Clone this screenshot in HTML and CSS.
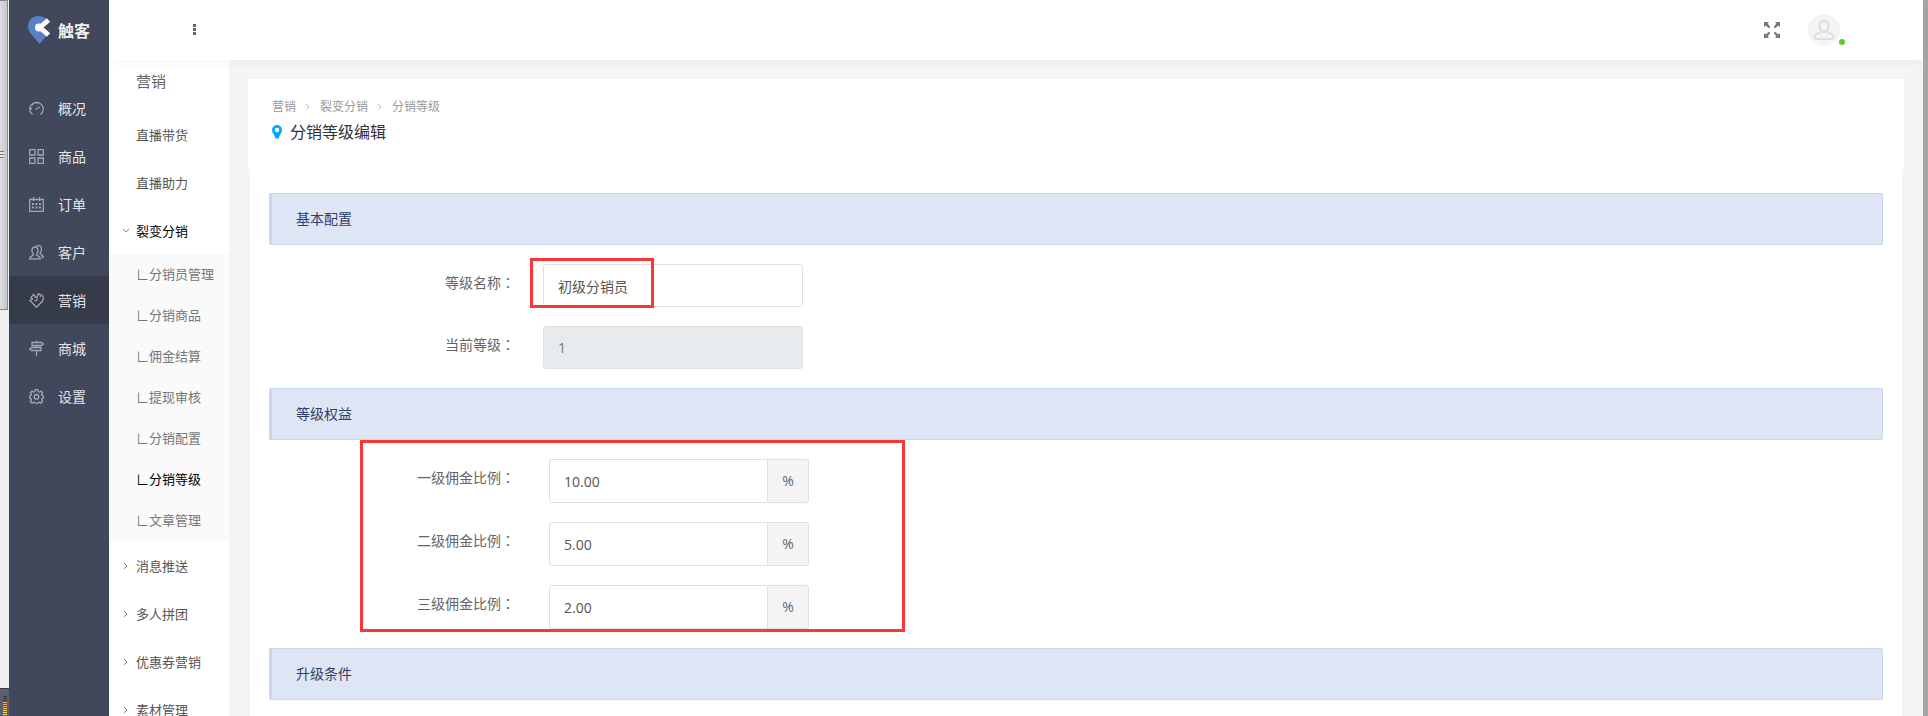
FILE: index.html
```
<!DOCTYPE html>
<html lang="zh-CN">
<head>
  <meta charset="UTF-8">
  <meta name="viewport" content="width=device-width, initial-scale=1.0">
  <title>分销等级编辑</title>
  <link rel="stylesheet" href="styles.css">
</head>
<body>
  <div class="edge">
    <div class="edge-thumb"><span class="edge-grip"></span></div>
    <div class="edge-meter"><span class="edge-bars"></span></div>
  </div>

  <nav class="sidebar">
    <a class="logo" href="#">
      <svg width="24" height="30" viewBox="0 0 24 30">
        <path d="M11.500 1C5.500 1 1 5.500 1 11.500c0 3 1.500 5.700 3.500 8L12.500 29l7.500-8.500L10 13l9-9.500C17 2 14.500 1 11.500 1z" fill="#5680c8"/>
        <path d="M21.500 5L13 12.500l8.500 7.500" fill="none" stroke="#fff" stroke-width="5"/>
        <circle cx="12" cy="12.500" r="4" fill="#fff"/>
      </svg>
      <span>触客</span>
    </a>
    <ul class="nav-list">
      <li><a href="#">
        <svg class="icon" viewBox="0 0 15 15"><path d="M3.500 13.500A6.700 6.700 0 1 1 11.500 13.500M6.500 8.500l4.500-2.500M7.500 1v2M1 7.500h2M3 3l1.200 1.200"/></svg>
        概况</a></li>
      <li><a href="#">
        <svg class="icon" viewBox="0 0 15 15"><path d="M.7.7h5.300v5.300H.7zM9 .7h5.300v5.300H9zM.7 9h5.300v5.300H.7zM9 9h5.300v5.300H9z"/></svg>
        商品</a></li>
      <li><a href="#">
        <svg class="icon" viewBox="0 0 15 15"><path d="M.7 2.500h13.600v11.800H.7zM4.500 0v4M10.500 0v4"/><path d="M3 7h2M6.500 7h2M10 7h2M3 10.500h2M6.500 10.500h2M10 10.500h2" stroke-width="2"/></svg>
        订单</a></li>
      <li><a href="#">
        <svg class="icon" viewBox="0 0 15 15"><path d="M6 2C4 2 3 3.500 3 5.500S4 8.500 4.500 9.500c0 1.500-3.800 1.500-3.800 4.300h10.600c0-2.800-3.800-2.800-3.800-4.300C8 8.500 9 7.500 9 5.500S8 2 6 2z"/><path d="M7 1.200C8 .6 9 .7 9.500.7c2 0 3 1.500 3 3.500s-1 3-1.500 4c0 1.500 3.300 1.500 3.300 4h-2"/></svg>
        客户</a></li>
      <li class="active"><a href="#">
        <svg class="icon" viewBox="0 0 15 15"><path d="M7.500 14.200L1 7.700l2.500-1.700L2 4.500 4.500 1.500l2 2.500c1 1.200 2.500 0 2-1.500C8.200 1 10.500 0 11 1.500c.3 1 0 2 1 2M12.500 1.200c1.500 1 1.800 2 1.800 4.500 0 1.200-.5 2-1.200 2.800l-5.600 5.700M5.500 7.500c1.500 1 3-.5 2.500-2"/></svg>
        营销</a></li>
      <li><a href="#">
        <svg class="icon" viewBox="0 0 15 15"><path d="M3 1.500h9.500L14.300 3l-1.800 1.500H3zM12 6.500H2.500L.7 8l1.800 1.500H12zM7.500 9.500V15M7.500 4.500v2M7.500 0v1.500"/></svg>
        商城</a></li>
      <li><a href="#">
        <svg class="icon" viewBox="0 0 15 15"><path d="M6.300.7h2.400l.4 1.900 1.300.5 1.600-1 1.600 1.600-1 1.600.5 1.300 1.200.3v2.400l-1.200.3-.5 1.300 1 1.600-1.600 1.600-1.600-1-1.300.5-.4 1.200H6.300l-.4-1.200-1.300-.5-1.600 1-1.600-1.600 1-1.600-.5-1.300-1.200-.3V6.900l1.200-.3.5-1.300-1-1.600L3 2.100l1.600 1 1.300-.5z"/><circle cx="7.500" cy="7.800" r="2.300"/></svg>
        设置</a></li>
    </ul>
  </nav>

  <div class="page">
    <header class="topbar">
      <button class="icon-btn" type="button" aria-label="更多">
        <svg width="4" height="12" viewBox="0 0 4 12"><path d="M0 0h3v3H0zM0 4h3v3H0zM0 8h3v3H0z" fill="#666"/></svg>
      </button>
      <div class="tools">
        <button class="icon-btn" type="button" aria-label="全屏">
          <svg width="16" height="16" viewBox="0 0 16 16"><path d="M0 0h5L3.500 1.500 6.300 5 5 6.300 1.500 3.500 0 5zM16 0v5l-1.500-1.500L11 6.300 9.700 5l2.800-3.500L11 0zM0 16v-5l1.500 1.500L5 9.700 6.300 11l-2.800 3.500L5 16zM16 16h-5l1.500-1.500L9.700 11 11 9.700l3.500 2.800L16 11z" fill="#777"/></svg>
        </button>
        <a class="avatar" href="#" aria-label="个人中心">
          <svg width="20" height="20" viewBox="0 0 20 20"><path d="M10 1c-3 0-4.500 2-4.500 5 0 3.500 2 6 4.500 6s4.500-2.500 4.500-6c0-3-1.500-5-4.500-5zM6.500 12.500C3 13 1 14 1 17.500c0 1 .5 1.500 1.500 1.500h15c1 0 1.500-.5 1.500-1.500 0-3.500-2-4.500-5.500-5" fill="none" stroke="#ddd" stroke-width="2"/></svg>
          <span class="online"></span>
        </a>
      </div>
    </header>

    <div class="body">
      <aside class="menu">
        <h2>营销</h2>
        <ul>
          <li><a href="#">直播带货</a></li>
          <li><a href="#">直播助力</a></li>
          <li class="open"><a href="#"><svg class="arrow" viewBox="0 0 8 8"><path d="M1 2l3 3 3-3"/></svg>裂变分销</a>
            <ul class="submenu">
              <li><a href="#">∟分销员管理</a></li>
              <li><a href="#">∟分销商品</a></li>
              <li><a href="#">∟佣金结算</a></li>
              <li><a href="#">∟提现审核</a></li>
              <li><a href="#">∟分销配置</a></li>
              <li class="current"><a href="#">∟分销等级</a></li>
              <li><a href="#">∟文章管理</a></li>
            </ul>
          </li>
          <li><a href="#"><svg class="arrow" viewBox="0 0 8 8"><path d="M2 1l3 3-3 3"/></svg>消息推送</a></li>
          <li><a href="#"><svg class="arrow" viewBox="0 0 8 8"><path d="M2 1l3 3-3 3"/></svg>多人拼团</a></li>
          <li><a href="#"><svg class="arrow" viewBox="0 0 8 8"><path d="M2 1l3 3-3 3"/></svg>优惠券营销</a></li>
          <li><a href="#"><svg class="arrow" viewBox="0 0 8 8"><path d="M2 1l3 3-3 3"/></svg>素材管理</a></li>
        </ul>
      </aside>

      <main class="content">
        <div class="page-head">
          <div class="breadcrumb">
            <a href="#">营销</a>
            <svg class="sep" viewBox="0 0 8 8"><path d="M2 1l3 3-3 3"/></svg>
            <a href="#">裂变分销</a>
            <svg class="sep" viewBox="0 0 8 8"><path d="M2 1l3 3-3 3"/></svg>
            <a href="#">分销等级</a>
          </div>
          <h1>
            <svg width="10" height="14" viewBox="0 0 10 14"><path d="M5 0a5 5 0 0 0-5 5c0 2.500 2.500 5 3.500 8.500h3C7.500 10 10 7.500 10 5a5 5 0 0 0-5-5zm0 2.800a2.200 2.200 0 1 1 0 4.400 2.200 2.200 0 0 1 0-4.400z" fill="#00a8ff"/></svg>
            分销等级编辑
          </h1>
        </div>

        <form class="panel">
          <h3 class="section">基本配置</h3>
          <div class="fields">
            <div class="row">
              <label for="level-name">等级名称<span class="colon" lang="zh-TW">：</span></label>
              <div class="control">
                <input id="level-name" type="text" value="初级分销员">
                <span class="mark mark-name"></span>
              </div>
            </div>
            <div class="row">
              <label for="level">当前等级<span class="colon" lang="zh-TW">：</span></label>
              <div class="control"><input id="level" type="text" value="1" disabled></div>
            </div>
          </div>

          <h3 class="section">等级权益</h3>
          <div class="fields">
            <div class="row">
              <label for="rate1">一级佣金比例<span class="colon" lang="zh-TW">：</span></label>
              <div class="control group"><input id="rate1" type="text" value="10.00"><span class="addon">%</span></div>
            </div>
            <div class="row">
              <label for="rate2">二级佣金比例<span class="colon" lang="zh-TW">：</span></label>
              <div class="control group"><input id="rate2" type="text" value="5.00"><span class="addon">%</span></div>
            </div>
            <div class="row">
              <label for="rate3">三级佣金比例<span class="colon" lang="zh-TW">：</span></label>
              <div class="control group"><input id="rate3" type="text" value="2.00"><span class="addon">%</span></div>
            </div>
            <span class="mark mark-rates"></span>
          </div>

          <h3 class="section">升级条件</h3>
        </form>
      </main>
    </div>
  </div>

  <div class="scrollbar"></div>
</body>
</html>
```
FILE: styles.css
```
* {
  box-sizing: border-box;
}
body {
  margin: 0;
  height: 100vh;
  overflow: hidden;
  display: flex;
  font-family: "Open Sans", "Noto Sans CJK SC", sans-serif;
  font-size: 14px;
  color: #666;
  background: #f4f4f4;
}
ul {
  list-style: none;
  margin: 0;
  padding: 0;
}
a {
  color: inherit;
  text-decoration: none;
}
h1, h2, h3 {
  margin: 0;
  font-weight: normal;
}

/* window edge */
.edge {
  flex: 0 0 9px;
  display: flex;
  flex-direction: column;
  background: #efefef;
}
.edge-thumb {
  height: 310px;
  width: 8px;
  display: flex;
  align-items: center;
  border: 1px solid #8a8a8a;
  border-left: 0;
  background: linear-gradient(to right, #dcdde0, #c6c7ca);
}
.edge-grip {
  width: 4px;
  height: 8px;
  background: repeating-linear-gradient(#777 0 1px, #e6e6e6 1px 3px);
}
.edge-meter {
  margin-top: auto;
  height: 28px;
  padding: 7px 2px 0 3px;
  border-top: 1px solid #3b3e48;
  background: #5a6070;
}
.edge-bars {
  display: block;
  height: 20px;
  background: repeating-linear-gradient(transparent 0 1px, #5a6070 1px 2px), linear-gradient(#33363f 0 6px, #e89a70 6px 10px, #f2d86a 14px);
}

/* main navigation */
.sidebar {
  flex: 0 0 100px;
  background: #42485b;
  color: #e3e4e7;
}
.logo {
  display: flex;
  align-items: center;
  gap: 7px;
  height: 60px;
  padding-left: 18px;
  font-size: 16px;
  font-weight: bold;
  color: #f0f0f0;
}
.nav-list {
  padding-top: 24px;
}
.nav-list a {
  display: flex;
  align-items: center;
  gap: 14px;
  height: 48px;
  padding-left: 20px;
}
.nav-list .active {
  background: #353b48;
}
.icon {
  width: 15px;
  height: 15px;
  fill: none;
  stroke: #a3a6ae;
  stroke-width: 1.3;
}

.page {
  flex: 1;
  min-width: 0;
  display: flex;
  flex-direction: column;
}
.topbar {
  position: relative;
  z-index: 1;
  flex: 0 0 60px;
  display: flex;
  align-items: center;
  justify-content: space-between;
  padding: 0 83px 0 80px;
  background: #fff;
  box-shadow: 0 0 12px rgba(0, 0, 0, 0.05);
}
.icon-btn {
  display: flex;
  padding: 4px;
  border: 0;
  background: none;
  cursor: pointer;
}
.tools {
  display: flex;
  align-items: center;
  gap: 24px;
}
.avatar {
  position: relative;
  display: flex;
  align-items: center;
  justify-content: center;
  width: 32px;
  height: 32px;
  border-radius: 50%;
  background: #f4f4f4;
}
.online {
  position: absolute;
  right: -5px;
  bottom: 1px;
  width: 6px;
  height: 6px;
  border-radius: 50%;
  background: #67c23a;
}
.body {
  flex: 1;
  min-height: 0;
  display: flex;
}

/* second level menu */
.menu {
  flex: 0 0 120px;
  background: #fff;
  font-size: 13px;
  color: #555;
}
.menu h2 {
  height: 50px;
  padding-left: 27px;
  font-size: 15px;
  line-height: 42px;
  color: #666;
}
.menu li a {
  display: flex;
  align-items: center;
  height: 48px;
  padding-left: 27px;
}
.menu .arrow {
  width: 8px;
  height: 8px;
  margin: 2px 6px 0 -14px;
}
.arrow, .sep {
  fill: none;
  stroke: #888;
}
.menu .open > a {
  color: #000;
}
.submenu {
  background: #fafafa;
  color: #777;
}
.menu .submenu a {
  height: 41px;
  padding-bottom: 2px;
}
.submenu .current {
  color: #000;
}

/* content */
.content {
  flex: 1;
  min-width: 0;
  display: flex;
  flex-direction: column;
  padding: 19px 19px 0;
}
.page-head {
  padding: 18px 24px 22px;
  background: #fff;
}
.breadcrumb {
  display: flex;
  align-items: center;
  gap: 8px;
  font-size: 12px;
  line-height: 20px;
  color: #999;
}
.sep {
  width: 8px;
  height: 8px;
  stroke: #bbb;
}
.page-head h1 {
  display: flex;
  align-items: center;
  gap: 8px;
  font-size: 16px;
  line-height: 30px;
  color: #333;
}
.panel {
  flex: 1;
  margin: 0 2px;
  padding: 24px 19px 0;
  background: #fff;
}
.section {
  height: 52px;
  padding-left: 24px;
  border: 1px solid #c8d6ef;
  border-left-width: 3px;
  border-radius: 2px;
  font-size: 14px;
  line-height: 50px;
  color: #2f3f69;
  background: #dee5f4;
}
.fields {
  position: relative;
  display: flex;
  flex-direction: column;
  gap: 19px;
  padding: 19px 0;
}
.row {
  display: flex;
}
.row label {
  width: 246px;
  line-height: 36px;
  text-align: right;
}
.colon {
  font-family: "Noto Sans CJK TC", sans-serif;
}
.control {
  position: relative;
  display: flex;
  width: 260px;
  height: 43px;
  margin-left: 28px;
}
.control.group {
  height: 44px;
  margin-left: 34px;
}
.control input {
  flex: 1;
  min-width: 0;
  padding: 0 14px;
  border: 1px solid #e0e0e0;
  border-radius: 3px;
  font: inherit;
  color: #555;
  background: #fff;
}
.control input:disabled {
  color: #777;
  background: #e7ebee;
}
.group input {
  border-radius: 3px 0 0 3px;
}
.addon {
  width: 41px;
  border: 1px solid #e0e0e0;
  border-left: 0;
  border-radius: 0 3px 3px 0;
  line-height: 42px;
  text-align: center;
  background: #f4f4f4;
}

/* red highlight frames */
.mark {
  position: absolute;
  border: 3px solid #fb3838;
  pointer-events: none;
}
.mark-name {
  left: -13px;
  top: -6px;
  width: 124px;
  height: 50px;
}
.mark-rates {
  left: 91px;
  top: 0;
  width: 545px;
  bottom: 16px;
}

.scrollbar {
  flex: 0 0 5px;
  background: #a6a6a6;
}
```
